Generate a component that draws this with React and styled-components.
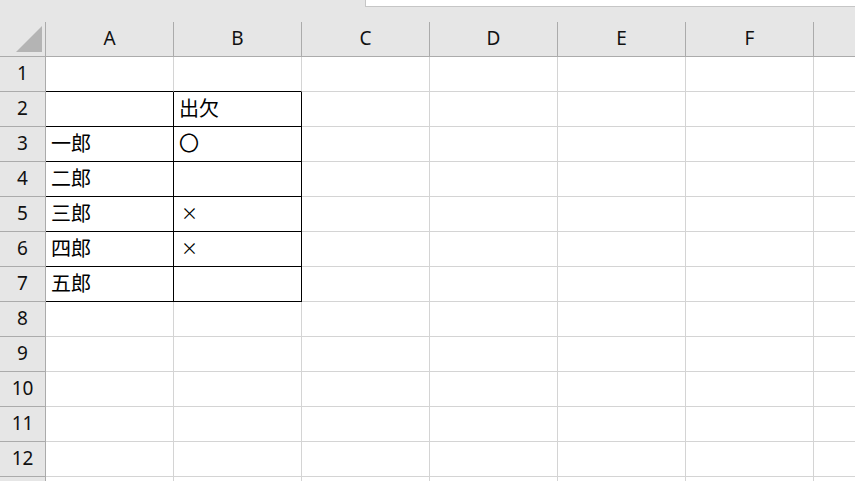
import React from "react";
import styled, { createGlobalStyle } from "styled-components";

const GlobalStyle = createGlobalStyle`
  html, body {
    margin: 0;
    padding: 0;
    background: #ffffff;
    overflow: hidden;
  }
  * {
    box-sizing: border-box;
  }
`;

const COLS = ["A", "B", "C", "D", "E", "F", "G"];
const ROWS = 13;

// table data: row -> [A, B]
const data = {
  2: ["", "出欠"],
  3: ["一郎", "〇"],
  4: ["二郎", ""],
  5: ["三郎", "×"],
  6: ["四郎", "×"],
  7: ["五郎", ""],
};

const GRID = "#d4d4d4";
const HEAD_LINE = "#ababab";

const Page = styled.div`
  width: 855px;
  height: 481px;
  overflow: hidden;
  background: #ffffff;
  font-family: "Noto Sans", "Noto Sans CJK JP", sans-serif;
`;

const TopBar = styled.div`
  height: 22px;
  background: #e6e6e6;
  display: flex;
  align-items: flex-start;
`;

const FormulaBox = styled.div`
  margin-left: 365px;
  flex: 1;
  height: 7px;
  background: #ffffff;
  border-left: 1px solid #c6c6c6;
  border-bottom: 1px solid #c6c6c6;
`;

const Sheet = styled.div`
  display: grid;
  grid-template-columns: 46px repeat(${COLS.length}, 128px);
  grid-template-rows: 35px repeat(${ROWS}, 35px);
`;

const Corner = styled.div`
  background: #e6e6e6;
  border-right: 1px solid ${HEAD_LINE};
  border-bottom: 1px solid ${HEAD_LINE};
  display: flex;
  align-items: flex-end;
  justify-content: flex-end;
  padding: 0 2px 3px 0;

  svg {
    display: block;
  }
`;

const ColHead = styled.div`
  background: #e6e6e6;
  border-right: 1px solid ${HEAD_LINE};
  border-bottom: 1px solid ${HEAD_LINE};
  display: flex;
  align-items: center;
  justify-content: center;
  font-size: 19px;
  color: #111;
  padding-bottom: 3px;
  overflow: hidden;
`;

const RowHead = styled.div`
  background: #e6e6e6;
  border-right: 1px solid ${HEAD_LINE};
  border-bottom: 1px solid ${HEAD_LINE};
  display: flex;
  align-items: center;
  justify-content: center;
  font-size: 19px;
  color: #111;
  padding-bottom: 2px;
`;

const Cell = styled.div`
  border-right: 1px solid ${(p) => (p.$right ? "#000" : GRID)};
  border-bottom: 1px solid ${(p) => (p.$bottom ? "#000" : GRID)};
  display: flex;
  align-items: center;
  padding: 0 0 4px 5px;
  font-family: "Noto Sans CJK JP", sans-serif;
  font-size: 20px;
  color: #000;
  white-space: nowrap;
`;

const Small = styled.span`
  font-size: ${(p) => p.$size}px;
  margin-left: ${(p) => p.$shift || 0}px;
`;

function CellText({ value }) {
  if (value === "×") return <Small $size={17} $shift={2}>{value}</Small>;
  if (value === "〇") return <Small $size={20}>{value}</Small>;
  return value;
}

export default function App() {
  return (
    <>
      <GlobalStyle />
      <Page>
        <TopBar>
          <FormulaBox />
        </TopBar>
        <Sheet>
          <Corner>
            <svg width="27" height="27" viewBox="0 0 27 27">
              <polygon points="26,0 26,26 0,26" fill="#b4b4b4" />
            </svg>
          </Corner>
          {COLS.map((c) => (
            <ColHead key={c}>{c}</ColHead>
          ))}
          {Array.from({ length: ROWS }, (_, i) => {
            const r = i + 1;
            const inTable = r >= 2 && r <= 7;
            const row = data[r] || [];
            return (
              <React.Fragment key={r}>
                <RowHead>{r}</RowHead>
                {COLS.map((c, ci) => {
                  const inCol = ci <= 1;
                  const right = inCol && inTable;
                  const bottom = inCol && r >= 1 && r <= 7;
                  return (
                    <Cell key={c} $right={right} $bottom={bottom}>
                      {inCol && row[ci] ? <CellText value={row[ci]} /> : null}
                    </Cell>
                  );
                })}
              </React.Fragment>
            );
          })}
        </Sheet>
      </Page>
    </>
  );
}
